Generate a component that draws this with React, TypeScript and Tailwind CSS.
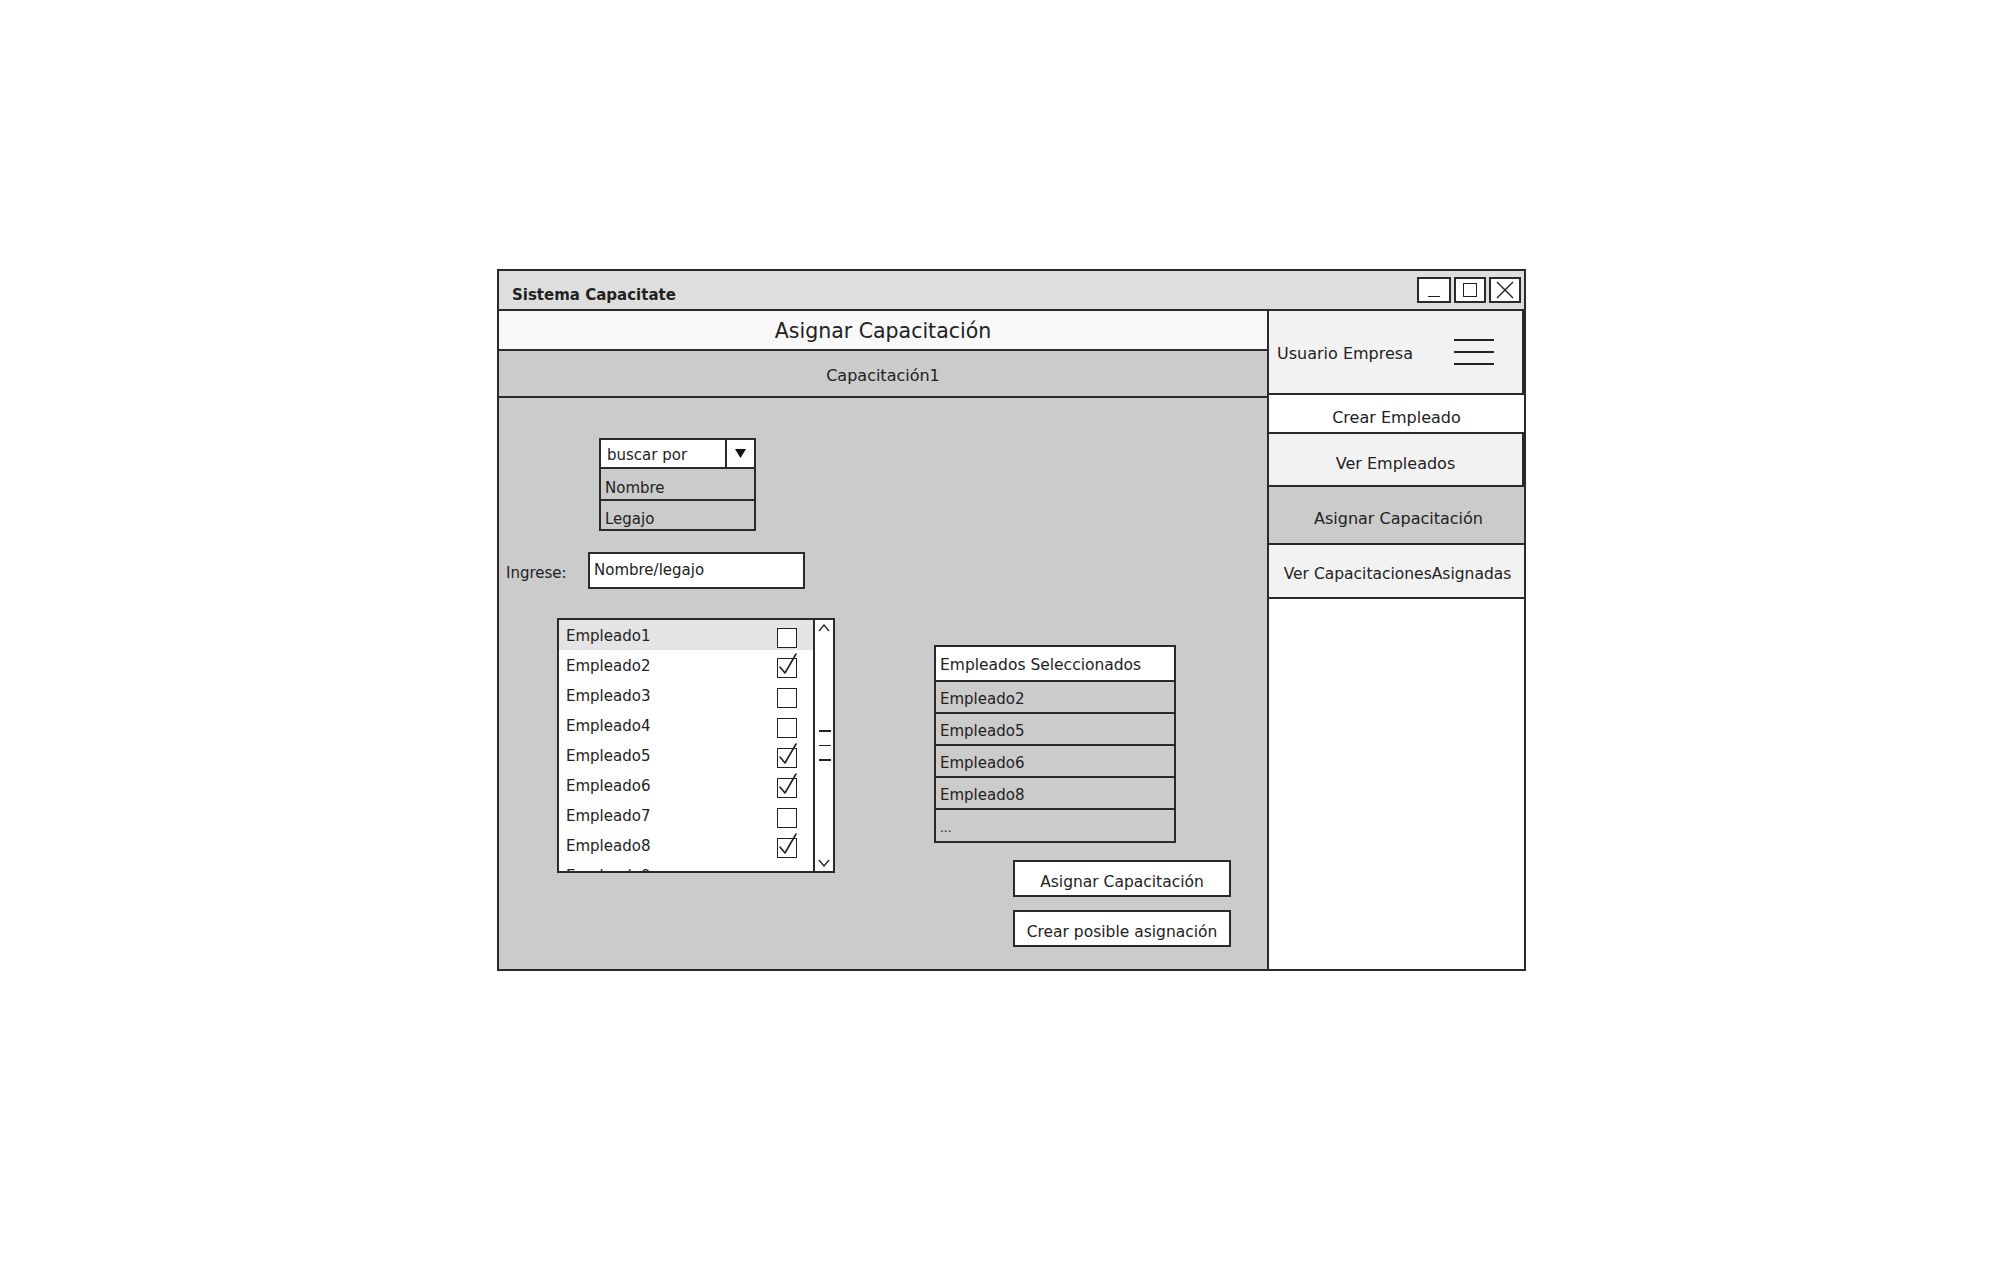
import React from "react";

const Check = ({ checked }: { checked: boolean }) => (
  <div className="relative w-[20px] h-[20px] border-[1.5px] border-[#222] bg-white shrink-0">
    {checked && (
      <svg className="absolute left-[-1px] top-[-8px] overflow-visible" width="24" height="28" viewBox="0 0 24 28">
        <path d="M3 16 L8 22 L19 3" fill="none" stroke="#222" strokeWidth="1.6" strokeLinecap="round" strokeLinejoin="round" />
      </svg>
    )}
  </div>
);

const employees = [
  { n: "Empleado1", c: false },
  { n: "Empleado2", c: true },
  { n: "Empleado3", c: false },
  { n: "Empleado4", c: false },
  { n: "Empleado5", c: true },
  { n: "Empleado6", c: true },
  { n: "Empleado7", c: false },
  { n: "Empleado8", c: true },
];

export default function App() {
  return (
    <div className="w-[2004px] h-[1275px] bg-white overflow-hidden font-['DejaVu_Sans',sans-serif] text-[#222]">
      <div className="ml-[497px] mt-[269px] w-[1029px] h-[702px] border-2 border-[#2a2a2a] flex flex-col">
        {/* Title bar */}
        <div className="h-[40px] border-b-2 border-[#2a2a2a] bg-[#dedede] flex items-center pl-[13px] pr-[3px]">
          <span className="text-[15px] font-bold mt-[10px]">Sistema Capacitate</span>
          <div className="ml-auto flex gap-[3px]">
            <div className="w-[34px] h-[26px] border-2 border-[#2a2a2a] bg-white flex items-end justify-center pb-[4px]">
              <div className="w-[12px] h-[1.5px] bg-[#222]" />
            </div>
            <div className="w-[32px] h-[26px] border-2 border-[#2a2a2a] bg-white flex items-center justify-center">
              <div className="w-[14px] h-[14px] border-[1.5px] border-[#222]" />
            </div>
            <div className="w-[32px] h-[26px] border-2 border-[#2a2a2a] bg-white flex items-center justify-center">
              <svg width="18" height="18" viewBox="0 0 18 18">
                <path d="M1 1 L17 17 M17 1 L1 17" stroke="#222" strokeWidth="1.4" />
              </svg>
            </div>
          </div>
        </div>
        {/* Body */}
        <div className="flex flex-1">
          {/* Main */}
          <div className="w-[770px] border-r-2 border-[#2a2a2a] flex flex-col bg-[#cbcbcb]">
            <div className="h-[40px] border-b-2 border-[#2a2a2a] bg-[#f8f8f8] flex items-center justify-center">
              <span className="text-[20.5px] mt-[2px]">Asignar Capacitación</span>
            </div>
            <div className="h-[47px] border-b-2 border-[#2a2a2a] bg-[#cbcbcb] flex items-center justify-center">
              <span className="text-[16px] mt-[5px]">Capacitación1</span>
            </div>
            <div className="flex-1 flex flex-col">
              {/* Dropdown */}
              <div className="mt-[40px] ml-[100px] w-[157px] flex flex-col">
                <div className="h-[31px] border-2 border-[#2a2a2a] bg-white flex">
                  <div className="flex-1 flex items-center pl-[6px] pt-[3px] text-[15px]">buscar por</div>
                  <div className="w-[29px] border-l-2 border-[#2a2a2a] flex items-center justify-center">
                    <svg width="11" height="9" viewBox="0 0 11 9">
                      <path d="M0 0 L11 0 L5.5 9 Z" fill="#111" />
                    </svg>
                  </div>
                </div>
                <div className="h-[32px] border-2 border-t-0 border-[#2a2a2a] flex items-center pl-[4px] pt-[8px] text-[15px]">Nombre</div>
                <div className="h-[30px] border-2 border-t-0 border-[#2a2a2a] flex items-center pl-[4px] pt-[8px] text-[15px]">Legajo</div>
              </div>
              {/* Ingrese */}
              <div className="mt-[21px] ml-[7px] flex items-center">
                <span className="text-[15px] w-[82px] mt-[5px]">Ingrese:</span>
                <div className="w-[217px] h-[37px] border-2 border-[#2a2a2a] bg-white flex items-center pl-[4px] pb-[1px] text-[15px]">
                  Nombre/legajo
                </div>
              </div>
              {/* Lists row */}
              <div className="mt-[29px] flex items-start">
                <div className="ml-[58px] w-[278px] h-[255px] border-2 border-[#2a2a2a] bg-white flex">
                  <div className="flex-1 overflow-hidden flex flex-col">
                    {employees.map((e, i) => (
                      <div
                        key={e.n}
                        className={`h-[30px] shrink-0 flex items-center pl-[7px] pr-[16px] pt-[2px] text-[15px] ${i === 0 ? "bg-[#e4e4e4]" : ""}`}
                      >
                        <span>{e.n}</span>
                        <div className="ml-auto mt-[3px]">
                          <Check checked={e.c} />
                        </div>
                      </div>
                    ))}
                    <div className="h-[30px] shrink-0 flex items-center pl-[7px] pt-[2px] text-[15px]">
                      <span>Empleado9</span>
                    </div>
                  </div>
                  <div className="w-[20px] border-l-2 border-[#2a2a2a] flex flex-col items-center justify-between py-[4px]">
                    <svg width="12" height="8" viewBox="0 0 12 8">
                      <path d="M1 7 L6 1 L11 7" fill="none" stroke="#222" strokeWidth="1.3" />
                    </svg>
                    <div className="flex flex-col gap-[13px] ml-[2px]">
                      <div className="w-[12px] h-[1.5px] bg-[#222]" />
                      <div className="w-[12px] h-[1.5px] bg-[#222]" />
                      <div className="w-[12px] h-[1.5px] bg-[#222]" />
                    </div>
                    <svg width="12" height="8" viewBox="0 0 12 8">
                      <path d="M1 1 L6 7 L11 1" fill="none" stroke="#222" strokeWidth="1.3" />
                    </svg>
                  </div>
                </div>
                <div className="ml-[99px] mt-[27px] flex flex-col">
                  <div className="w-[242px] border-2 border-[#2a2a2a] flex flex-col">
                    <div className="h-[35px] border-b-2 border-[#2a2a2a] bg-white flex items-center pl-[4px] pt-[5px] text-[15.5px]">
                      Empleados Seleccionados
                    </div>
                    {["Empleado2", "Empleado5", "Empleado6", "Empleado8"].map((n) => (
                      <div key={n} className="h-[32px] border-b-2 border-[#2a2a2a] flex items-center pl-[4px] pt-[5px] text-[15px]">
                        {n}
                      </div>
                    ))}
                    <div className="h-[31px] flex items-center pl-[4px] pt-[5px] text-[12px]">...</div>
                  </div>
                  <div className="ml-[79px] mt-[17px] flex flex-col gap-[13px]">
                    <div className="w-[218px] h-[37px] border-2 border-[#2a2a2a] bg-white flex items-center justify-center pt-[8px] text-[15.5px]">
                      Asignar Capacitación
                    </div>
                    <div className="w-[218px] h-[37px] border-2 border-[#2a2a2a] bg-white flex items-center justify-center pt-[9px] text-[15.5px]">
                      Crear posible asignación
                    </div>
                  </div>
                </div>
              </div>
            </div>
          </div>
          {/* Sidebar */}
          <div className="flex-1 bg-white flex flex-col">
            <div className="h-[84px] border-2 border-l-0 border-t-0 border-[#2a2a2a] bg-[#f2f2f2] flex items-center pl-[8px] pr-[28px]">
              <span className="text-[16px] mt-[4px]">Usuario Empresa</span>
              <div className="ml-auto flex flex-col gap-[10px]">
                <div className="w-[40px] h-[2px] bg-[#222]" />
                <div className="w-[40px] h-[2px] bg-[#222]" />
                <div className="w-[40px] h-[2px] bg-[#222]" />
              </div>
            </div>
            <div className="h-[39px] border-b-2 border-[#2a2a2a] bg-white flex items-center justify-center pt-[8px] text-[16px]">
              Crear Empleado
            </div>
            <div className="h-[53px] border-b-2 border-r-2 border-[#2a2a2a] bg-[#f2f2f2] flex items-center justify-center text-[16px] pt-[9px]">
              Ver Empleados
            </div>
            <div className="h-[58px] border-b-2 border-[#2a2a2a] bg-[#cbcbcb] flex items-center justify-center text-[16px] pl-[4px] pt-[8px]">
              Asignar Capacitación
            </div>
            <div className="h-[54px] border-b-2 border-[#2a2a2a] bg-[#f2f2f2] flex items-center justify-center text-[15.5px] pl-[2px] pt-[8px]">
              Ver CapacitacionesAsignadas
            </div>
          </div>
        </div>
      </div>
    </div>
  );
}
